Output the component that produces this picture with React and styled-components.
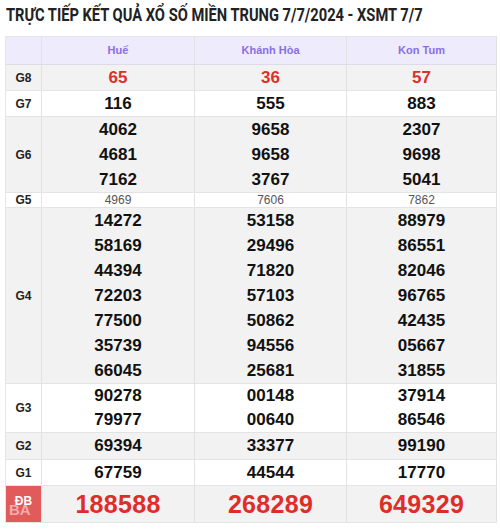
import React from "react";
import styled, { createGlobalStyle } from "styled-components";

const Global = createGlobalStyle`
  html, body { margin: 0; padding: 0; background: #fff; }
  body { font-family: "Liberation Sans", Arial, sans-serif; }
`;

const Page = styled.div`
  width: 500px;
  padding: 0 0 0 5px;
  box-sizing: border-box;
`;

const Title = styled.h1`
  margin: 0;
  padding: 3px 0 0 1px;
  height: 36px;
  box-sizing: border-box;
  font-family: Roboto, "Liberation Sans", sans-serif;
  font-weight: 700;
  font-size: 18px;
  line-height: 24px;
  color: #222;
  white-space: nowrap;
`;

const TitleText = styled.span`
  display: inline-block;
  transform: scaleX(0.815);
  transform-origin: left center;
`;

const Table = styled.div`
  width: 491px;
  border-top: 1px solid #e6e6e6;
  border-left: 1px solid #e6e6e6;
`;

const Row = styled.div`
  display: grid;
  grid-template-columns: 36px 153px 152px 150px;
  background: ${(p) => p.$bg};
  border-bottom: 1px solid ${(p) => (p.$head ? "#dcdbe8" : "#e4e4e4")};
`;

const Label = styled.div`
  display: flex;
  align-items: center;
  justify-content: center;
  font-weight: 700;
  font-size: 12px;
  color: #222;
  border-right: 1px solid #e2e2e2;
  ${(p) => p.$db && `background: #e25b5b; color: #fff; position: relative;`}
`;

const Cell = styled.div`
  display: flex;
  flex-direction: column;
  align-items: center;
  justify-content: center;
  border-right: 1px solid #e2e2e2;
`;

const HeadText = styled.div`
  height: 27px;
  line-height: 27px;
  font-size: 11px;
  font-weight: 700;
  color: #8a6fe3;
`;

const Num = styled.div`
  height: ${(p) => p.$h}px;
  line-height: ${(p) => p.$h}px;
  font-size: ${(p) => p.$size}px;
  font-weight: ${(p) => (p.$light ? 400 : 700)};
  color: ${(p) => p.$color};
  letter-spacing: ${(p) => (p.$big ? "0.3px" : "0")};
`;

const Watermark = styled.span`
  position: absolute;
  left: 3px;
  top: 15px;
  font-size: 15px;
  font-weight: 700;
  color: rgba(255, 255, 255, 0.5);
`;

const DbText = styled.span`
  position: relative;
  top: -3px;
  font-size: 12px;
  color: #fff;
`;

const rows = [
  { g: "G8", v: [["65"], ["36"], ["57"]], kind: "g8" },
  { g: "G7", v: [["116"], ["555"], ["883"]] },
  { g: "G6", v: [["4062", "4681", "7162"], ["9658", "9658", "3767"], ["2307", "9698", "5041"]] },
  { g: "G5", v: [["4969"], ["7606"], ["7862"]], kind: "g5" },
  {
    g: "G4",
    v: [
      ["14272", "58169", "44394", "72203", "77500", "35739", "66045"],
      ["53158", "29496", "71820", "57103", "50862", "94556", "25681"],
      ["88979", "86551", "82046", "96765", "42435", "05667", "31855"],
    ],
  },
  { g: "G3", v: [["90278", "79977"], ["00148", "00640"], ["37914", "86546"]], kind: "g3" },
  { g: "G2", v: [["69394"], ["33377"], ["99190"]], kind: "g2" },
  { g: "G1", v: [["67759"], ["44544"], ["17770"]] },
  { g: "ĐB", v: [["188588"], ["268289"], ["649329"]], kind: "db" },
];

function numProps(kind) {
  switch (kind) {
    case "g8": return { $h: 25, $size: 17, $color: "#d9312e" };
    case "g5": return { $h: 14, $size: 12, $color: "#555", $light: true };
    case "g3": return { $h: 24, $size: 17, $color: "#111" };
    case "g2": return { $h: 26, $size: 17, $color: "#111" };
    case "db": return { $h: 36, $size: 25, $color: "#dd2e2a", $big: true };
    default: return { $h: 25, $size: 17, $color: "#111" };
  }
}

export default function App() {
  return (
    <Page>
      <Global />
      <Title>
        <TitleText>TRỰC TIẾP KẾT QUẢ XỔ SỐ MIỀN TRUNG 7/7/2024 - XSMT 7/7</TitleText>
      </Title>
      <Table>
        <Row $bg="#edebfc" $head>
          <Label />
          <Cell><HeadText>Huế</HeadText></Cell>
          <Cell><HeadText>Khánh Hòa</HeadText></Cell>
          <Cell><HeadText>Kon Tum</HeadText></Cell>
        </Row>
        {rows.map((r, i) => (
          <Row key={r.g} $bg={i % 2 === 0 ? "#f2f2f2" : "#ffffff"}>
            {r.kind === "db" ? (
              <Label $db>
                <DbText>ĐB</DbText>
                <Watermark>BA</Watermark>
              </Label>
            ) : (
              <Label>{r.g}</Label>
            )}
            {r.v.map((col, j) => (
              <Cell key={j}>
                {col.map((n, k) => (
                  <Num key={k} {...numProps(r.kind)}>{n}</Num>
                ))}
              </Cell>
            ))}
          </Row>
        ))}
      </Table>
    </Page>
  );
}
